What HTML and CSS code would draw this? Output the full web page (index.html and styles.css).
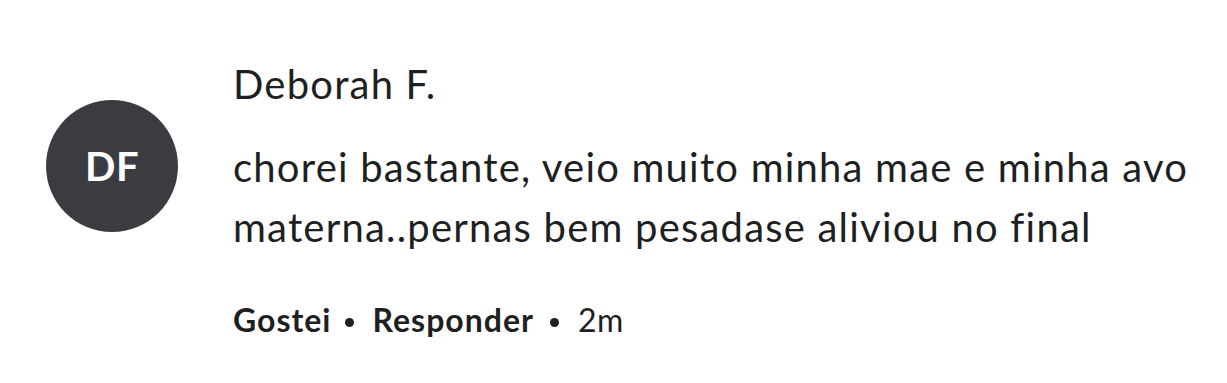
FILE: index.html
```html
<!DOCTYPE html>
<html lang="pt">
<head>
<meta charset="utf-8">
<link rel="stylesheet" href="styles.css">
</head>
<body>
<div class="comment">
  <div class="avatar">DF</div>
  <div class="content">
    <div class="name">Deborah F.</div>
    <p class="text">chorei bastante, veio muito minha mae e minha avo<br>materna..pernas bem pesadase aliviou no final</p>
    <div class="actions">
      <span class="action">Gostei</span>
      <span class="dot dot-first"></span>
      <span class="action">Responder</span>
      <span class="dot dot-second"></span>
      <span class="time">2m</span>
    </div>
  </div>
</div>
</body>
</html>
```
FILE: styles.css
```css
html, body {
  margin: 0;
  padding: 0;
  background: #ffffff;
}
body {
  font-family: "Lato", "Open Sans", sans-serif;
  color: #1e1f21;
  width: 1227px;
  height: 383px;
  overflow: hidden;
}
.comment {
  display: flex;
  align-items: flex-start;
  padding: 56px 0 0 46px;
  gap: 55px;
}
.avatar {
  flex: none;
  width: 132px;
  height: 132px;
  margin-top: 44px;
  border-radius: 50%;
  background: #3a3c41;
  color: #ffffff;
  display: flex;
  align-items: center;
  justify-content: center;
  font-size: 40px;
  font-weight: 700;
  letter-spacing: 0.5px;
}
.content {
  display: flex;
  flex-direction: column;
}
.name {
  font-size: 40px;
  line-height: 56px;
  letter-spacing: 1.2px;
}
.text {
  margin: 25px 0 0;
  font-size: 40px;
  line-height: 60px;
  letter-spacing: 1.2px;
}
.actions {
  margin-top: 43px;
  display: flex;
  align-items: center;
  font-size: 32px;
  line-height: 40px;
}
.action {
  font-weight: 700;
  letter-spacing: 1px;
}
.dot {
  width: 9px;
  height: 9px;
  border-radius: 50%;
  background: #1e1f21;
  margin-top: 4px;
}
.dot-first {
  margin-left: 14px;
  margin-right: 18px;
}
.dot-second {
  margin-left: 16px;
  margin-right: 19px;
}
.time {
  letter-spacing: 0.5px;
}
```
